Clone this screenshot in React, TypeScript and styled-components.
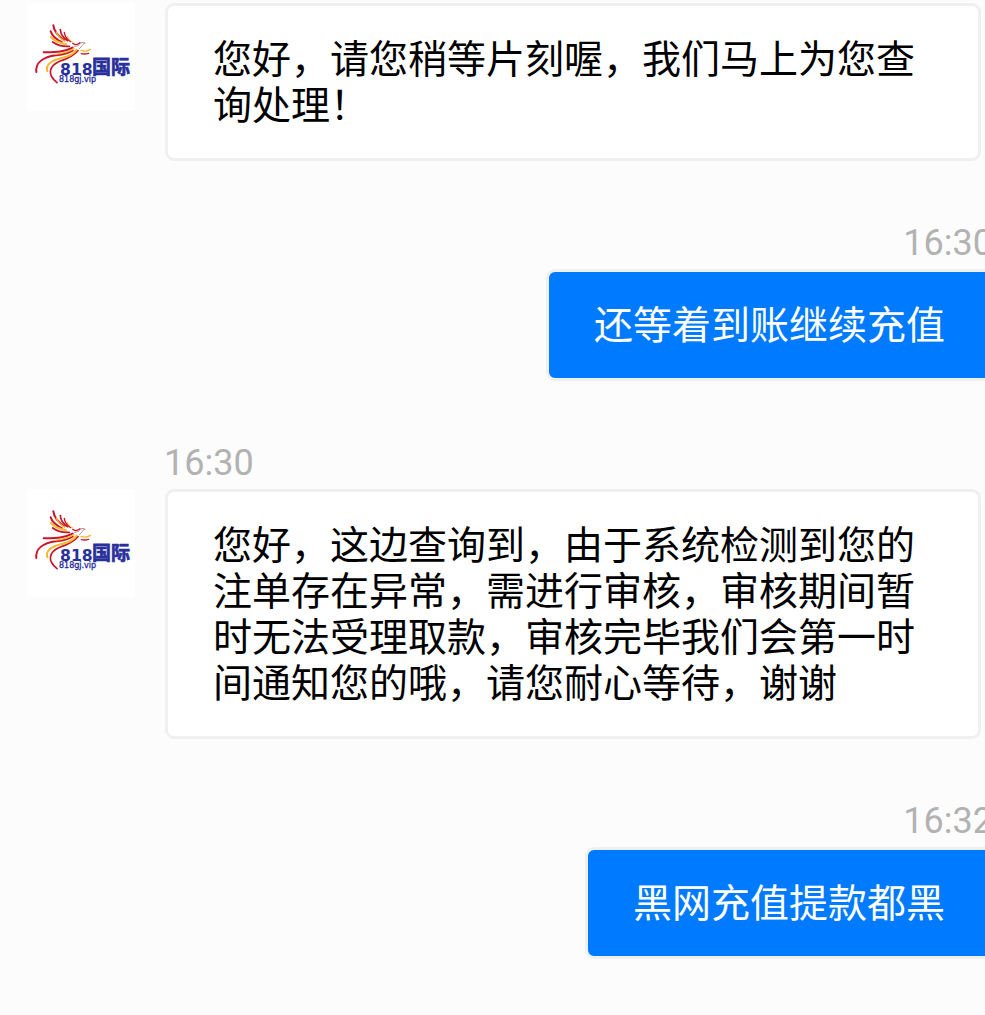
import React from "react";
import styled, { createGlobalStyle } from "styled-components";

const GlobalStyle = createGlobalStyle`
  * { box-sizing: border-box; }
  body {
    margin: 0;
    background: #fcfcfc;
    font-family: "Noto Sans CJK SC", sans-serif;
    overflow-x: hidden;
  }
`;

type Side = "agent" | "visitor";

const Thread = styled.main`
  display: flex;
  flex-direction: column;
  gap: 62px;
  padding: 3px 0 56px 27px;
  margin-right: -8px;
`;

const Row = styled.article<{ $side: Side }>`
  display: flex;
  align-items: flex-end;
  flex-direction: column;
  padding-right: ${(p) => (p.$side === "agent" ? 12 : 0)}px;
`;

const Time = styled.time<{ $side: Side }>`
  align-self: ${(p) => (p.$side === "agent" ? "flex-start" : "flex-end")};
  margin-left: ${(p) => (p.$side === "agent" ? 137 : 0)}px;
  margin-bottom: 6px;
  font-family: Roboto, sans-serif;
  font-size: 36px;
  line-height: 40px;
  color: #b2b2b2;
`;

const Line = styled.div<{ $side: Side }>`
  display: flex;
  align-items: flex-start;
  gap: 30px;
  width: ${(p) => (p.$side === "agent" ? "100%" : "auto")};
`;

const Avatar = styled.svg`
  flex: none;
  width: 108px;
  height: 108px;
  background: #fff;
`;

const Bubble = styled.p<{ $side: Side }>`
  flex: 1;
  margin: 0;
  padding: 27px 45px 33px;
  border: 3px solid #f0f0f0;
  border-radius: 9px;
  font-size: 39px;
  line-height: 46px;
  color: ${(p) => (p.$side === "agent" ? "#000" : "#fff")};
  background: ${(p) => (p.$side === "agent" ? "#fff" : "#007aff")};
`;

function Logo() {
  return (
    <Avatar viewBox="21 9 324 324" role="img" aria-label="818国际">
      <g fill="none" stroke="#c9142b" strokeLinecap="round" strokeWidth="6">
        <path d="M100 76C102 93 113 107 133 121" />
        <path d="M92 94C96 108 108 118 126 127" />
        <path d="M121 89C122 103 130 114 143 122" strokeWidth="5" />
        <path d="M133 97C134 109 141 118 152 125" strokeWidth="4" />
        <path d="M98 126C112 136 130 140 148 139" strokeWidth="5" />
        <path d="M71 157C105 156 133 156 158 143" />
        <path d="M49 216C46 188 70 171 108 166C128 163 146 160 158 151" />
        <path d="M111 248C82 225 85 199 119 184C143 176 162 166 174 152" strokeWidth="5" />
        <path d="M184 161C192 163 199 162 206 160" strokeWidth="4" />
        <path d="M158 130C165 136 173 134 180 128" strokeWidth="4" />
      </g>
      <g fill="none" stroke="#f5b82e" strokeLinecap="round" strokeWidth="5">
        <path d="M93 111C103 123 118 129 138 133" strokeWidth="6" />
        <path d="M109 96C113 108 121 116 134 123" strokeWidth="4" />
        <path d="M142 109C144 117 150 122 158 126" strokeWidth="3" />
        <path d="M106 163C130 161 149 156 162 145" strokeWidth="4" />
        <path d="M82 214C76 194 95 181 123 175C146 170 162 161 170 149" strokeWidth="6" />
        <path d="M183 151C193 155 203 153 211 148" strokeWidth="4" />
      </g>
      <path d="M162 139C171 139 177 136 182 130C187 126 191 127 196 130C189 129 189 135 183 141L177 147" fill="none" stroke="#b99a96" strokeWidth="3" />
      <g fill="#29309b">
        <text x="120" y="225" fontFamily="DejaVu Sans, sans-serif" fontSize="47" fontWeight="700">
          818
        </text>
        <text
          x="216"
          y="222"
          fontFamily="Noto Sans CJK SC, sans-serif"
          fontSize="57"
          fontWeight="700"
          stroke="#29309b"
          strokeWidth="2"
        >
          国际
        </text>
        <text x="117" y="246" fontFamily="DejaVu Sans, sans-serif" fontSize="24" stroke="#29309b" strokeWidth="1">
          818gj.vip
        </text>
      </g>
    </Avatar>
  );
}

interface MessageProps {
  side: Side;
  time?: string;
  children: React.ReactNode;
}

function Message({ side, time, children }: MessageProps) {
  return (
    <Row $side={side}>
      {time && <Time $side={side}>{time}</Time>}
      <Line $side={side}>
        {side === "agent" && <Logo />}
        <Bubble $side={side}>{children}</Bubble>
      </Line>
    </Row>
  );
}

export default function App() {
  return (
    <>
      <GlobalStyle />
      <Thread>
        <Message side="agent">您好，请您稍等片刻喔，我们马上为您查询处理！</Message>
        <Message side="visitor" time="16:30">还等着到账继续充值</Message>
        <Message side="agent" time="16:30">
          您好，这边查询到，由于系统检测到您的注单存在异常，需进行审核，审核期间暂时无法受理取款，审核完毕我们会第一时间通知您的哦，请您耐心等待，谢谢
        </Message>
        <Message side="visitor" time="16:32">黑网充值提款都黑</Message>
      </Thread>
    </>
  );
}
